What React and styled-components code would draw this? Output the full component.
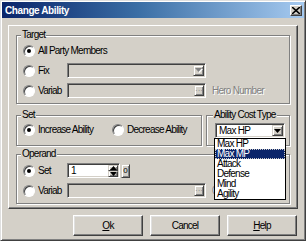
import React from 'react'
import styled, { createGlobalStyle } from 'styled-components'

const GlobalStyle = createGlobalStyle`
  html, body { margin: 0; padding: 0; background: #d4d0c8; }
  body {
    font-family: "Liberation Sans", Arial, sans-serif;
    font-size: 10px;
    letter-spacing: -0.75px;
    color: #000;
  }
  * { box-sizing: border-box; }
`

const FACE = '#d4d0c8'

const Window = styled.div`
  width: 306px;
  height: 241px;
  background: ${FACE};
  border: 1px solid;
  border-color: #dfdfdf #404040 #404040 #dfdfdf;
  box-shadow: inset 1px 1px #fff, inset -1px -1px #808080;
  padding: 1px;
  display: flex;
  flex-direction: column;
`

const TitleBar = styled.div`
  height: 16px;
  display: flex;
  align-items: center;
  justify-content: space-between;
  padding: 0 2px 0 3px;
  background: linear-gradient(90deg, #0a246a 0%, #3a6ea5 45%, #a6caf0 100%);
  color: #fff;
  font-weight: bold;
  letter-spacing: -0.4px;
`

const CloseBox = styled.div`
  width: 12px;
  height: 11px;
  background: ${FACE};
  border: 1px solid;
  border-color: #fff #404040 #404040 #fff;
  box-shadow: inset -1px -1px #808080;
  display: flex;
  align-items: center;
  justify-content: center;
`

const Body = styled.div`
  padding: 7px 6px 0 6px;
  display: flex;
  flex-direction: column;
`

const Panel = styled.div`
  height: 184px;
  border: 1px solid;
  border-color: #fff #404040 #404040 #fff;
  box-shadow: inset -1px -1px #808080;
  padding: 9px 7px 4px 7px;
  display: flex;
  flex-direction: column;
`

const Group = styled.div`
  position: relative;
  border: 1px solid #808080;
  box-shadow: inset 1px 1px #fff, 1px 1px #fff;
  padding: ${p => p.$pad || '7px 6px 5px 6px'};
  margin-top: ${p => p.$top || '0'};
  width: ${p => p.$w || 'auto'};
  display: flex;
  flex-direction: column;
  gap: 5px;
`

const Legend = styled.span`
  position: absolute;
  top: -7px;
  left: ${p => p.$left || '4px'};
  padding: 0 1px;
  line-height: 12px;
  background: ${FACE};
`

const SetRow = styled.div`
  display: flex;
  gap: 4px;
  margin-top: 11px;
`

const Row = styled.div`
  display: flex;
  align-items: center;
  height: 15px;
`

const Option = styled.label`
  display: flex;
  align-items: center;
  width: ${p => p.$w || 'auto'};
  flex-shrink: 0;
`

const Radio = styled.span`
  position: relative;
  width: 12px;
  height: 12px;
  border-radius: 50%;
  background: #fff;
  border: 1px solid;
  border-color: #808080 #fff #fff #808080;
  box-shadow: inset 1px 1px #404040;
  margin-right: 3px;
  flex-shrink: 0;
  &::after {
    content: '';
    display: ${p => (p.$on ? 'block' : 'none')};
    position: absolute;
    left: 3px;
    top: 3px;
    width: 4px;
    height: 4px;
    border-radius: 50%;
    background: #000;
  }
`

const Field = styled.div`
  width: ${p => p.$w || '139px'};
  height: 15px;
  background: ${p => (p.$disabled ? FACE : '#fff')};
  border: 1px solid;
  border-color: #808080 #fff #fff #808080;
  box-shadow: inset 1px 1px #404040, inset -1px -1px ${FACE};
  padding: 1px 1px 1px 3px;
  display: flex;
  align-items: center;
  justify-content: space-between;
  line-height: 11px;
`

const SmallButton = styled.div`
  width: ${p => p.$w || '11px'};
  height: ${p => p.$h || '11px'};
  margin-left: ${p => p.$ml || '0'};
  background: ${FACE};
  border: 1px solid;
  border-color: ${FACE} #404040 #404040 ${FACE};
  box-shadow: inset 1px 1px #fff, inset -1px -1px #808080;
  display: flex;
  align-items: center;
  justify-content: center;
  flex-shrink: 0;
  font-size: 8px;
  line-height: 8px;
  letter-spacing: 0;
  color: ${p => (p.$disabled ? '#808080' : '#000')};
`

const Spin = styled.div`
  width: 10px;
  height: 11px;
  display: flex;
  flex-direction: column;
`

const SpinHalf = styled(SmallButton)`
  width: 10px;
  height: 6px;
`

const Hint = styled.span`
  margin-left: 6px;
  color: #808080;
  text-shadow: 1px 1px #fff;
`

const SelectWrap = styled.div`
  position: relative;
  margin-left: 1px;
`

const DropList = styled.ul`
  position: absolute;
  top: 15px;
  left: -1px;
  width: 72px;
  height: 62px;
  margin: 0;
  padding: 0;
  list-style: none;
  background: #fff;
  border: 1px solid #000;
  z-index: 2;
`

const DropItem = styled.li`
  height: 10px;
  line-height: 10px;
  padding-left: 2px;
  background: ${p => (p.$sel ? '#0a246a' : 'transparent')};
  color: ${p => (p.$sel ? '#fff' : '#000')};
  outline: ${p => (p.$sel ? '1px dotted #c8c8c8' : 'none')};
  outline-offset: -1px;
`

const ButtonRow = styled.div`
  display: flex;
  justify-content: flex-end;
  gap: 7px;
  margin-top: 6px;
  padding-right: 1px;
`

const Button = styled.div`
  width: 70px;
  height: 21px;
  border: 1px solid;
  border-color: #fff #404040 #404040 #fff;
  box-shadow: inset -1px -1px #808080, inset 1px 1px #dfdfdf;
  display: flex;
  align-items: center;
  justify-content: center;
  u { text-decoration: underline; }
`

const Arrow = ({ color = '#000', up = false }) => (
  <svg width="7" height="4" viewBox="0 0 7 4">
    <polygon points={up ? '0,4 7,4 3.5,0' : '0,0 7,0 3.5,4'} fill={color} />
  </svg>
)

const GrayArrow = () => (
  <svg width="8" height="5" viewBox="0 0 8 5">
    <polygon points="1,1 8,1 4.5,5" fill="#fff" />
    <polygon points="0,0 7,0 3.5,4" fill="#808080" />
  </svg>
)

const Close = () => (
  <svg width="8" height="7" viewBox="0 0 8 7">
    <path d="M0 0 L8 7 M8 0 L0 7" stroke="#000" strokeWidth="1.6" />
  </svg>
)

const abilities = ['Max HP', 'Max MP', 'Attack', 'Defense', 'Mind', 'Agility']

export default function App() {
  return (
    <Window>
      <GlobalStyle />
      <TitleBar>
        <span>Change Ability</span>
        <CloseBox><Close /></CloseBox>
      </TitleBar>
      <Body>
        <Panel>
          <Group>
            <Legend>Target</Legend>
            <Row>
              <Option><Radio $on />All Party Members</Option>
            </Row>
            <Row>
              <Option $w="44px"><Radio />Fix</Option>
              <Field $disabled>
                <span />
                <SmallButton><GrayArrow /></SmallButton>
              </Field>
            </Row>
            <Row>
              <Option $w="44px"><Radio />Variab</Option>
              <Field $disabled>
                <span />
                <SmallButton $w="10px" $disabled>···</SmallButton>
              </Field>
              <Hint>Hero Number</Hint>
            </Row>
          </Group>

          <SetRow>
            <Group $w="188px" $pad="6px 6px 8px 6px">
              <Legend>Set</Legend>
              <Row>
                <Option $w="89px"><Radio $on />Increase Ability</Option>
                <Option><Radio />Decrease Ability</Option>
              </Row>
            </Group>
            <Group $w="84px" $pad="7px 5px 6px 7px">
              <Legend $left="6px">Ability Cost Type</Legend>
              <SelectWrap>
                <Field $w="70px">
                  <span>Max HP</span>
                  <SmallButton><Arrow /></SmallButton>
                </Field>
                <DropList>
                  {abilities.map(a => (
                    <DropItem key={a} $sel={a === 'Max MP'}>{a}</DropItem>
                  ))}
                </DropList>
              </SelectWrap>
            </Group>
          </SetRow>

          <Group $top="8px" $pad="8px 6px 5px 6px">
            <Legend>Operand</Legend>
            <Row>
              <Option $w="44px"><Radio $on />Set</Option>
              <Field $w="53px">
                <span>1</span>
                <Spin>
                  <SpinHalf><Arrow up /></SpinHalf>
                  <SpinHalf><Arrow /></SpinHalf>
                </Spin>
              </Field>
              <SmallButton $w="9px" $h="14px" $ml="1px">0</SmallButton>
            </Row>
            <Row>
              <Option $w="44px"><Radio />Variab</Option>
              <Field $disabled>
                <span />
                <SmallButton $w="10px" $disabled>···</SmallButton>
              </Field>
              <Hint>0</Hint>
            </Row>
          </Group>
        </Panel>
        <ButtonRow>
          <Button><u>O</u>k</Button>
          <Button>Cancel</Button>
          <Button><u>H</u>elp</Button>
        </ButtonRow>
      </Body>
    </Window>
  )
}
